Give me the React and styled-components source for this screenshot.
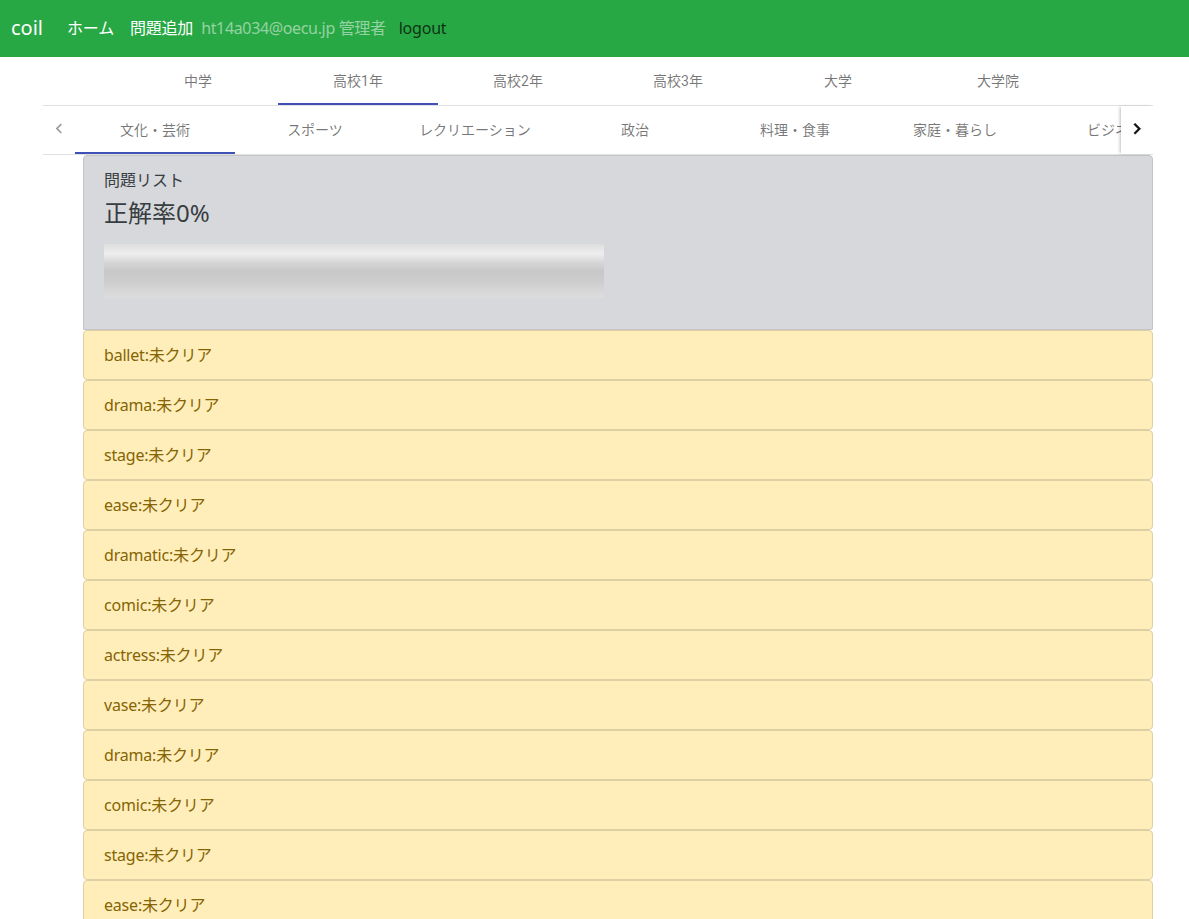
import React from "react";
import styled, { createGlobalStyle } from "styled-components";

const GlobalStyle = createGlobalStyle`
  html, body { margin: 0; padding: 0; background: #fff; }
  body {
    font-family: "Noto Sans", "Open Sans", "Noto Sans CJK JP", sans-serif;
    font-size: 16px;
    color: #212529;
  }
  * { box-sizing: border-box; }
`;

const Navbar = styled.nav`
  height: 57px;
  background: #28a745;
  display: flex;
  align-items: center;
  padding: 0 11px 1px;
`;

const Brand = styled.span`
  font-size: 20px;
  color: #fff;
  margin-right: 16px;
  line-height: 30px;
`;

const NavLink = styled.span`
  font-size: 16px;
  padding: 8px;
  line-height: 24px;
  color: #fff;
  letter-spacing: -0.2px;
`;

const NavText = styled.span`
  font-size: 16px;
  line-height: 24px;
  color: rgba(255, 255, 255, 0.5);
  letter-spacing: -0.35px;
  margin-right: 13px;
`;

const LogoutButton = styled.span`
  font-size: 16px;
  line-height: 24px;
  color: rgba(0, 0, 0, 0.72);
  letter-spacing: -0.2px;
`;

const Content = styled.div`
  width: 1110px;
  margin-left: 43px;
`;

const TabRow = styled.div`
  position: relative;
  display: flex;
  justify-content: ${(p) => (p.$centered ? "center" : "flex-start")};
  height: 49px;
  border-bottom: 1px solid #e0e0e0;
`;

const TabsScroller = styled.div`
  flex: 1;
  display: flex;
  overflow: hidden;
`;

const Tab = styled.div`
  position: relative;
  flex: 0 0 160px;
  height: 48px;
  display: flex;
  align-items: center;
  justify-content: center;
  padding-bottom: 3px;
  font-family: Roboto, "Noto Sans CJK JP", sans-serif;
  font-size: 14px;
  color: rgba(0, 0, 0, 0.54);
  white-space: nowrap;
  &::after {
    content: "";
    position: absolute;
    left: 0;
    right: 0;
    bottom: 0;
    height: 2px;
    background: ${(p) => (p.$active ? "#3f51b5" : "transparent")};
  }
`;

const ScrollButton = styled.div`
  flex: 0 0 32px;
  height: 48px;
  display: flex;
  align-items: center;
  justify-content: center;
  padding-bottom: 2px;
  background: #fff;
  color: ${(p) => (p.$disabled ? "rgba(0,0,0,0.4)" : "#111")};
  box-shadow: ${(p) => (p.$shadow ? "-2px 0 3px -1px rgba(0,0,0,0.25)" : "none")};
  z-index: 1;
`;

const Card = styled.div`
  margin-left: 40px;
  width: 1070px;
`;

const CardHeader = styled.div`
  background: #d6d8db;
  border: 1px solid #c3c5c8;
  border-radius: 4px 4px 0 0;
  padding: 12px 20px 31px;
  color: #383d41;
`;

const HeaderTitle = styled.div`
  font-size: 16px;
  line-height: 24px;
`;

const Rate = styled.div`
  font-size: 24px;
  line-height: 29px;
  margin-top: 6px;
`;

const Progress = styled.div`
  margin-top: 17px;
  width: 500px;
  height: 54px;
  background: linear-gradient(
    to bottom,
    #dedede 0%,
    #eeeeee 18%,
    #d4d4d4 36%,
    #c8c8c8 50%,
    #cdcdcd 70%,
    #d9d9d9 90%,
    #dcdcdc 100%
  );
`;

const Item = styled.div`
  height: 50px;
  padding: 12px 20px;
  line-height: 24px;
  font-size: 16px;
  background: #ffeeba;
  color: #856404;
  border: 1px solid #dfd0a3;
  border-radius: 4px;
  letter-spacing: -0.2px;
`;

const ChevronLeft = () => (
  <svg width="20" height="20" viewBox="0 0 24 24" fill="currentColor">
    <path d="M15.41 16.09l-4.58-4.59 4.58-4.59L14 5.5l-6 6 6 6z" />
  </svg>
);

const ChevronRight = () => (
  <svg width="22" height="22" viewBox="0 0 24 24" fill="currentColor">
    <path
      d="M8.59 16.34l4.58-4.59-4.58-4.59L10 5.75l6 6-6 6z"
      stroke="currentColor"
      strokeWidth="0.6"
    />
  </svg>
);

const levels = ["中学", "高校1年", "高校2年", "高校3年", "大学", "大学院"];
const categories = [
  "文化・芸術",
  "スポーツ",
  "レクリエーション",
  "政治",
  "料理・食事",
  "家庭・暮らし",
  "ビジネス",
];
const words = [
  "ballet",
  "drama",
  "stage",
  "ease",
  "dramatic",
  "comic",
  "actress",
  "vase",
  "drama",
  "comic",
  "stage",
  "ease",
];

export default function App() {
  return (
    <>
      <GlobalStyle />
      <Navbar>
        <Brand>coil</Brand>
        <NavLink>ホーム</NavLink>
        <NavLink>問題追加</NavLink>
        <NavText>ht14a034@oecu.jp 管理者</NavText>
        <LogoutButton>logout</LogoutButton>
      </Navbar>
      <Content>
        <TabRow $centered>
          {levels.map((l, i) => (
            <Tab key={l} $active={i === 1}>
              {l}
            </Tab>
          ))}
        </TabRow>
        <TabRow>
          <ScrollButton $disabled>
            <ChevronLeft />
          </ScrollButton>
          <TabsScroller>
            {categories.map((c, i) => (
              <Tab key={c} $active={i === 0}>
                {c}
              </Tab>
            ))}
          </TabsScroller>
          <ScrollButton $shadow>
            <ChevronRight />
          </ScrollButton>
        </TabRow>
        <Card>
          <CardHeader>
            <HeaderTitle>問題リスト</HeaderTitle>
            <Rate>正解率0%</Rate>
            <Progress />
          </CardHeader>
          {words.map((w, i) => (
            <Item key={i}>{w}:未クリア</Item>
          ))}
        </Card>
      </Content>
    </>
  );
}
